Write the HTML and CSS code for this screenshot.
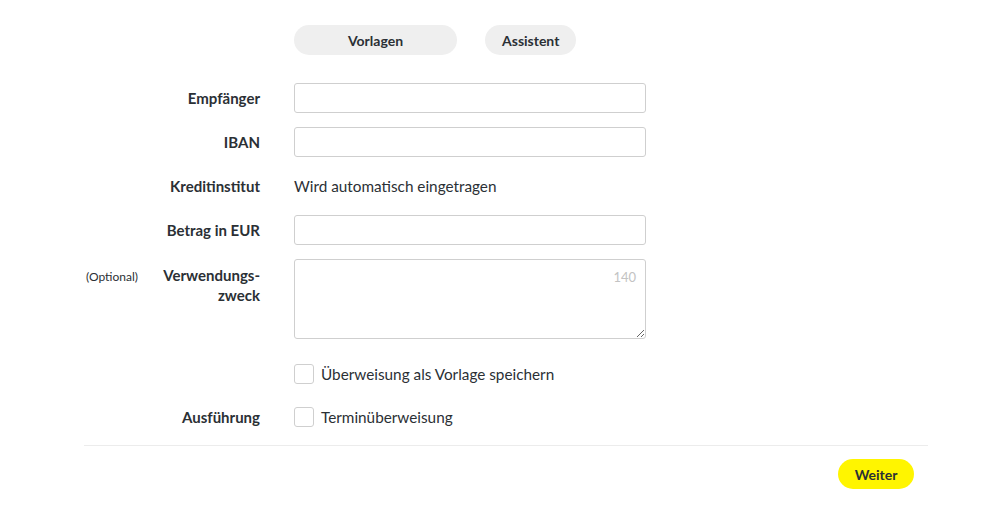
FILE: index.html
```html
<!DOCTYPE html>
<html lang="de">
<head>
<meta charset="utf-8">
<title>Überweisung</title>
<link rel="stylesheet" href="styles.css">
</head>
<body>
<div class="container">
  <div class="tabs">
    <button class="tab tab-wide">Vorlagen</button>
    <button class="tab">Assistent</button>
  </div>

  <form class="form">
    <div class="row">
      <label class="label">Empfänger</label>
      <input type="text" class="field">
    </div>
    <div class="row">
      <label class="label">IBAN</label>
      <input type="text" class="field">
    </div>
    <div class="row">
      <label class="label">Kreditinstitut</label>
      <span class="static">Wird automatisch eingetragen</span>
    </div>
    <div class="row">
      <label class="label">Betrag in EUR</label>
      <input type="text" class="field">
    </div>
    <div class="row row-top">
      <div class="label label-split">
        <span class="optional">(Optional)</span>
        <span>Verwendungs-<br>zweck</span>
      </div>
      <div class="area-wrap">
        <textarea class="area"></textarea>
        <span class="counter">140</span>
      </div>
    </div>
    <div class="row row-check first-check">
      <span class="label"></span>
      <label class="check"><span class="box"></span>Überweisung als Vorlage speichern</label>
    </div>
    <div class="row row-check last-check">
      <span class="label">Ausführung</span>
      <label class="check"><span class="box"></span>Terminüberweisung</label>
    </div>
  </form>

  <div class="footer">
    <button class="next">Weiter</button>
  </div>
</div>
</body>
</html>
```

FILE: styles.css
```css
body {
  margin: 0;
  font-family: Lato, "Open Sans", Arial, sans-serif;
  color: #2b3035;
  background: #fff;
}
.container {
  width: 844px;
  margin-left: 84px;
  padding-top: 25px;
}
.tabs {
  display: flex;
  gap: 28px;
  margin-left: 210px;
  margin-bottom: 28px;
}
.tab {
  height: 30px;
  padding: 0 17px;
  border: none;
  border-radius: 15px;
  background-color: #efefef;
  font-family: inherit;
  font-size: 14px;
  font-weight: 700;
  color: #2b3035;
}
.tab-wide {
  width: 163px;
}
.form {
  display: flex;
  flex-direction: column;
  gap: 14px;
}
.row {
  display: grid;
  grid-template-columns: 176px 352px;
  column-gap: 34px;
  align-items: center;
  min-height: 30px;
}
.row-top {
  align-items: start;
}
.first-check {
  margin-top: 6px;
}
.last-check {
  margin-top: -1px;
}
.label {
  text-align: right;
  font-size: 15px;
  font-weight: 700;
}
.label-split {
  display: flex;
  justify-content: space-between;
  line-height: 20px;
  padding-top: 6px;
}
.optional {
  font-size: 12px;
  font-weight: 400;
  padding-left: 2px;
  padding-top: 2px;
}
.field {
  height: 30px;
  box-sizing: border-box;
  border: 1px solid #cfcfcf;
  border-radius: 3px;
  padding: 0 10px;
  font-family: inherit;
  font-size: 14px;
}
.static {
  font-size: 15.3px;
}
.area-wrap {
  position: relative;
}
.area {
  display: block;
  width: 352px;
  height: 80px;
  box-sizing: border-box;
  border: 1px solid #cfcfcf;
  border-radius: 3px;
  font-family: inherit;
  font-size: 14px;
  resize: vertical;
}
.counter {
  position: absolute;
  top: 10px;
  right: 10px;
  font-size: 13px;
  color: #c3c3c3;
}
.check {
  display: flex;
  align-items: center;
  gap: 7px;
  font-size: 15.3px;
}
.box {
  width: 18px;
  height: 18px;
  border: 1px solid #cfcfcf;
  border-radius: 3px;
}
.footer {
  margin-top: 13px;
  border-top: 1px solid #ececec;
  padding-top: 13px;
  display: flex;
  justify-content: flex-end;
  padding-right: 14px;
}
.next {
  height: 30px;
  width: 76px;
  border: none;
  border-radius: 15px;
  background-color: #fff500;
  font-family: inherit;
  font-size: 14px;
  font-weight: 700;
  color: #2b3035;
}
```
